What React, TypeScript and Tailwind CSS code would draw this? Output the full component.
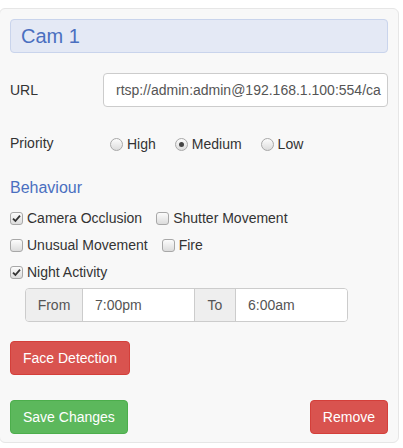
import React from "react"

function Check({ checked }: { checked?: boolean }) {
  return (
    <span className="w-[13px] h-[13px] rounded-[3px] border border-[#a8a8a8] bg-gradient-to-b from-[#fcfcfc] to-[#dcdcdc] flex items-center justify-center shrink-0">
      {checked && (
        <svg width="9" height="9" viewBox="0 0 9 9">
          <path d="M1 4.6 L3.4 7 L8 1.6" fill="none" stroke="#333" strokeWidth="1.8" />
        </svg>
      )}
    </span>
  )
}

function Radio({ checked }: { checked?: boolean }) {
  return (
    <span className="w-[13px] h-[13px] rounded-full border border-[#a8a8a8] bg-gradient-to-b from-[#fcfcfc] to-[#dcdcdc] flex items-center justify-center shrink-0">
      {checked && <span className="w-[5px] h-[5px] rounded-full bg-[#444]" />}
    </span>
  )
}

function CheckItem({ label, checked }: { label: string; checked?: boolean }) {
  return (
    <label className="flex items-center gap-[4px] mr-[14px]">
      <Check checked={checked} />
      <span>{label}</span>
    </label>
  )
}

function RadioItem({ label, checked }: { label: string; checked?: boolean }) {
  return (
    <label className="flex items-center gap-[4px] mr-[19px] mt-[3px]">
      <Radio checked={checked} />
      <span>{label}</span>
    </label>
  )
}

export default function App() {
  return (
    <div className="w-[403px] h-[448px] bg-white font-['Liberation_Sans',Arial,sans-serif] text-[14px] text-[#333] pt-[8px] overflow-hidden">
      <div className="-ml-[1px] w-[400px] border border-[#e6e6e6] rounded-[6px] bg-[#f8f8f8] px-[10px] pt-[10px] pb-[8px]">
        {/* Title */}
        <div className="h-[34px] border border-[#c9d4ec] bg-[#e4e9f5] rounded-[4px] px-[10px] flex items-center text-[20px] text-[#4a6fc0]">
          Cam 1
        </div>

        {/* URL */}
        <div className="mt-[20px] h-[34px] flex items-center">
          <span className="w-[93px]">URL</span>
          <div className="flex-1 h-[34px] border border-[#ccc] rounded-[4px] bg-white px-[12px] flex items-center overflow-hidden whitespace-nowrap text-[#555]">
            rtsp://admin:admin@192.168.1.100:554/ca
          </div>
        </div>

        {/* Priority */}
        <div className="mt-[26px] h-[20px] flex items-center">
          <span className="w-[100px]">Priority</span>
          <RadioItem label="High" />
          <RadioItem label="Medium" checked />
          <RadioItem label="Low" />
        </div>

        {/* Behaviour */}
        <div className="mt-[24px] h-[22px] flex items-center text-[16px] text-[#4a6fc0]">Behaviour</div>

        <div className="mt-[9px] h-[20px] flex items-center">
          <CheckItem label="Camera Occlusion" checked />
          <CheckItem label="Shutter Movement" />
        </div>
        <div className="mt-[7px] h-[20px] flex items-center">
          <CheckItem label="Unusual Movement" />
          <CheckItem label="Fire" />
        </div>
        <div className="mt-[7px] h-[20px] flex items-center">
          <CheckItem label="Night Activity" checked />
        </div>

        {/* Time range */}
        <div className="mt-[6px] ml-[15px] w-[323px] h-[34px] flex border border-[#ccc] rounded-[4px] overflow-hidden">
          <span className="w-[57px] bg-[#eee] border-r border-[#ccc] flex items-center justify-center text-[#555]">From</span>
          <span className="w-[111px] bg-white px-[12px] flex items-center text-[#555]">7:00pm</span>
          <span className="w-[42px] bg-[#eee] border-x border-[#ccc] flex items-center justify-center text-[#555]">To</span>
          <span className="flex-1 bg-white px-[12px] flex items-center text-[#555]">6:00am</span>
        </div>

        {/* Face detection */}
        <button className="mt-[19px] h-[34px] px-[12px] rounded-[4px] bg-[#d9534f] border border-[#d43f3a] text-white">
          Face Detection
        </button>

        {/* Footer */}
        <div className="mt-[25px] flex justify-between">
          <button className="h-[34px] px-[12px] rounded-[4px] bg-[#5cb85c] border border-[#4cae4c] text-white">
            Save Changes
          </button>
          <button className="h-[34px] px-[12px] rounded-[4px] bg-[#d9534f] border border-[#d43f3a] text-white">
            Remove
          </button>
        </div>
      </div>
    </div>
  )
}
